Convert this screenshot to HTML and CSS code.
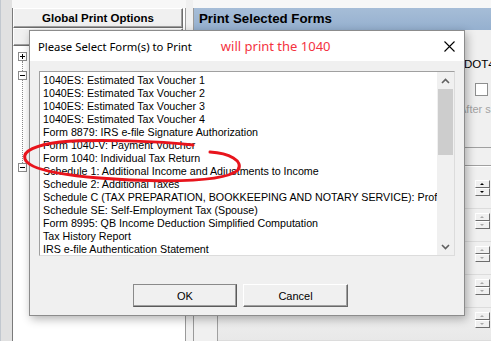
FILE: index.html
```html
<!DOCTYPE html>
<html lang="en">
<head>
    <meta charset="UTF-8">
    <title>Print Selected Forms</title>
    <link rel="stylesheet" href="styles.css">
</head>
<body>

<div class="desk">
    <div class="edge"></div>

    <div class="side">
        <div class="panel-btn">Global Print Options</div>
        <div class="panel-btn panel-btn-low"></div>
        <div class="tree">
            <span class="tbox plus"></span>
            <div class="stem">
                <span class="tbox"></span>
            </div>
            <span class="tbox"></span>
        </div>
    </div>

    <div class="split"></div>

    <div class="main">
        <div class="main-head">Print Selected Forms</div>
        <div class="main-body">
            <div class="opts">
                <div class="opt-name">DOT4_</div>
                <div class="opt-check"><span class="check"></span></div>
                <div class="opt-note">After sa</div>
                <div class="opt-line"></div>
                <div class="opt-line opt-line-2"></div>
                <div class="spin-row"><div class="spin on"><span class="up"></span><span class="down"></span></div></div>
                <div class="spin-row"><div class="spin"><span class="up"></span><span class="down"></span></div></div>
                <div class="spin-row"><div class="spin"><span class="up"></span><span class="down"></span></div></div>
                <div class="spin-row"><div class="spin"><span class="up"></span><span class="down"></span></div></div>
                <div class="spin-row"><div class="spin"><span class="up"></span><span class="down"></span></div></div>
            </div>
        </div>
    </div>
</div>

<div class="dialog">
    <div class="dlg-title">
        <span class="dlg-caption">Please Select Form(s) to Print</span>
        <span class="dlg-note">will print the 1040</span>
        <svg class="dlg-close" width="11" height="11" viewBox="0 0 11 11">
            <path d="M0.5 0.5 L10.5 10.5 M10.5 0.5 L0.5 10.5" stroke="#000" stroke-width="1.1" fill="none"/>
        </svg>
    </div>
    <div class="dlg-body">
        <div class="listbox">
            <ul class="forms">
                <li>1040ES: Estimated Tax Voucher 1</li>
                <li>1040ES: Estimated Tax Voucher 2</li>
                <li>1040ES: Estimated Tax Voucher 3</li>
                <li>1040ES: Estimated Tax Voucher 4</li>
                <li>Form 8879: IRS e-file Signature Authorization</li>
                <li>Form 1040-V: Payment Voucher</li>
                <li>Form 1040: Individual Tax Return</li>
                <li>Schedule 1: Additional Income and Adjustments to Income</li>
                <li>Schedule 2: Additional Taxes</li>
                <li>Schedule C (TAX PREPARATION, BOOKKEEPING AND NOTARY SERVICE): Prof</li>
                <li>Schedule SE: Self-Employment Tax (Spouse)</li>
                <li>Form 8995: QB Income Deduction Simplified Computation</li>
                <li>Tax History Report</li>
                <li>IRS e-file Authentication Statement</li>
            </ul>
            <div class="scrollbar">
                <div class="sb-arrow">
                    <svg width="9" height="6" viewBox="0 0 9 6"><path d="M1 5 L4.5 1.5 L8 5" stroke="#606060" stroke-width="1.6" fill="none"/></svg>
                </div>
                <div class="sb-track"><div class="sb-thumb"></div></div>
                <div class="sb-arrow">
                    <svg width="9" height="6" viewBox="0 0 9 6"><path d="M1 1 L4.5 4.5 L8 1" stroke="#606060" stroke-width="1.6" fill="none"/></svg>
                </div>
            </div>
        </div>
        <div class="dlg-buttons">
            <button class="btn btn-default">OK</button>
            <button class="btn">Cancel</button>
        </div>
    </div>
</div>

<!-- hand-drawn mark over the screenshot -->
<svg class="mark" width="491" height="341" viewBox="0 0 491 341">
    <path d="M193 145 C160 141 95 139 60 142 C36 145 22 151 25 159 C29 171 70 177 130 180 C180 182 226 181 238 170 C244 161 229 153 210 152"
          stroke="#e8141c" stroke-width="3" fill="none" stroke-linecap="round" stroke-linejoin="round"/>
</svg>

</body>
</html>
```

FILE: styles.css
```css
body {
    margin: 0;
    font-family: "Liberation Sans", Arial, sans-serif;
    background-color: #f7f7f7;
    overflow: hidden;
}

.desk {
    display: flex;
    width: 491px;
    height: 341px;
}

.edge {
    flex: none;
    width: 11px;
    background-color: #e1e1e1;
    border-left: 1px solid #c2c8cf;
}

/* left panel */
.side {
    flex: none;
    width: 172px;
    margin-top: 8px;
    display: flex;
    flex-direction: column;
    border-left: 1px solid #7a7a7a;
    border-right: 1px solid #9a9a9a;
    background-color: #fff;
}
.panel-btn {
    width: 168px;
    height: 18px;
    background-color: #f0f0f0;
    border: 1px solid;
    border-color: #fff #6d6d6d #6d6d6d #fff;
    box-shadow: inset -1px -1px #a0a0a0;
    font-size: 11.5px;
    font-weight: bold;
    line-height: 18px;
    text-align: center;
    color: #000;
}
.panel-btn-low {
    height: 16px;
}
.tree {
    padding: 6px 0 0 5px;
    display: flex;
    flex-direction: column;
    align-items: flex-start;
}
.tbox {
    position: relative;
    display: block;
    width: 7px;
    height: 7px;
    border: 1px solid #8a8a8a;
    background-color: #fff;
}
.tbox::before {
    content: "";
    position: absolute;
    left: 1px;
    top: 3px;
    width: 5px;
    height: 1px;
    background-color: #000;
}
.tbox.plus::after {
    content: "";
    position: absolute;
    left: 3px;
    top: 1px;
    width: 1px;
    height: 5px;
    background-color: #000;
}
.stem {
    margin-left: 4px;
    height: 92px;
    padding-top: 10px;
    border-left: 1px dotted #8a8a8a;
}
.stem .tbox {
    margin-left: -5px;
}

.split {
    flex: none;
    width: 7px;
    background-color: #f0f0f0;
}

/* right panel */
.main {
    flex: 1;
    min-width: 0;
    margin-top: 8px;
    display: flex;
    flex-direction: column;
    border-left: 1px solid #9a9a9a;
    background-color: #f0f0f0;
}
.main-head {
    height: 22px;
    line-height: 22px;
    padding-left: 5px;
    background: linear-gradient(#a6bdd7, #95b0cf);
    font-size: 13.3px;
    font-weight: bold;
    color: #000;
}
.main-body {
    flex: 1;
    min-width: 0;
    padding: 0 0 11px 23px;
    display: flex;
}
.opts {
    flex: 1;
    min-width: 0;
    overflow: hidden;
    display: flex;
    flex-direction: column;
    border-left: 1px solid #a0a0a0;
    border-bottom: 1px solid #a0a0a0;
    background: linear-gradient(#f0f0f0 90%, #e8e8e8);
}
.opt-name {
    margin-top: 27px;
    padding-left: 246px;
    font-size: 11.5px;
    line-height: 14px;
    white-space: nowrap;
}
.opt-check {
    margin-top: 12px;
    padding-left: 257px;
}
.check {
    display: block;
    width: 11px;
    height: 11px;
    border: 1px solid #8e8f8f;
    background-color: #fff;
}
.opt-note {
    margin-top: 6px;
    padding-left: 241px;
    font-size: 11px;
    line-height: 14px;
    color: #a3a3a3;
    white-space: nowrap;
}
.opt-line {
    margin-top: 31px;
    height: 1px;
    background-color: #a0a0a0;
}
.opt-line-2 {
    margin-top: 17px;
    border-bottom: 1px solid #fff;
}
.spin-row {
    height: 28px;
    display: flex;
    justify-content: flex-end;
    align-items: flex-start;
    padding-top: 4px;
    padding-right: 1px;
    border-bottom: 1px solid #dcdcdc;
}
.opt-line-2 + .spin-row {
    margin-top: 9px;
}
.spin {
    display: flex;
    flex-direction: column;
}
.spin span {
    position: relative;
    width: 13px;
    height: 6px;
    background-color: #f0f0f0;
    border: 1px solid;
    border-color: #fff #6d6d6d #6d6d6d #fff;
}
.spin span::after {
    content: "";
    position: absolute;
    left: 4px;
    top: 2px;
    border-left: 2px solid transparent;
    border-right: 2px solid transparent;
}
.spin .up::after {
    border-bottom: 2px solid #a8a8a8;
}
.spin .down::after {
    border-top: 2px solid #a8a8a8;
}
.spin.on .up::after {
    border-bottom-color: #000;
}
.spin.on .down::after {
    border-top-color: #000;
}

/* print dialog */
.dialog {
    position: absolute;
    left: 29px;
    top: 30px;
    width: 434px;
    height: 284px;
    border: 1px solid #8c8c8c;
    background-color: #f0f0f0;
    box-shadow: 2px 3px 9px rgba(0, 0, 0, 0.3);
}
.dlg-title {
    height: 30px;
    display: flex;
    align-items: center;
    padding: 0 9px 0 8px;
    background-color: #fff;
}
.dlg-caption {
    font-family: "Noto Sans", sans-serif;
    font-size: 11.3px;
    color: #000;
}
.dlg-note {
    margin-left: 29px;
    font-family: "Noto Sans", sans-serif;
    font-size: 13px;
    color: #f4323f;
}
.dlg-close {
    margin-left: auto;
}
.dlg-body {
    padding: 10px 9px 0 9px;
}
.listbox {
    height: 183px;
    display: flex;
    border: 1px solid;
    border-color: #a0a0a0 #dcdcdc #dcdcdc #a0a0a0;
    background-color: #fff;
}
.forms {
    flex: 1;
    min-width: 0;
    margin: 0;
    padding: 2px 0 0 3px;
    list-style: none;
    overflow: hidden;
}
.forms li {
    height: 13px;
    font-size: 10.7px;
    line-height: 13px;
    white-space: nowrap;
    color: #000;
}
.scrollbar {
    flex: none;
    width: 17px;
    display: flex;
    flex-direction: column;
    background-color: #f0f0f0;
}
.sb-arrow {
    height: 17px;
    display: flex;
    align-items: center;
    justify-content: center;
}
.sb-track {
    flex: 1;
    padding: 0 1px;
}
.sb-thumb {
    height: 66px;
    background-color: #cdcdcd;
}
.dlg-buttons {
    display: flex;
    gap: 6px;
    margin-top: 28px;
    padding-left: 94px;
}
.btn {
    width: 105px;
    height: 23px;
    padding: 0;
    background-color: #f0f0f0;
    border: 1px solid;
    border-color: #fff #696969 #696969 #fff;
    box-shadow: inset -1px -1px #a0a0a0;
    font-family: "Liberation Sans", Arial, sans-serif;
    font-size: 11px;
    color: #000;
}
.btn-default {
    width: 104px;
    border-color: #8a8a8a #5a5a5a #5a5a5a #8a8a8a;
}

.mark {
    position: absolute;
    left: 0;
    top: 0;
    pointer-events: none;
}
```
